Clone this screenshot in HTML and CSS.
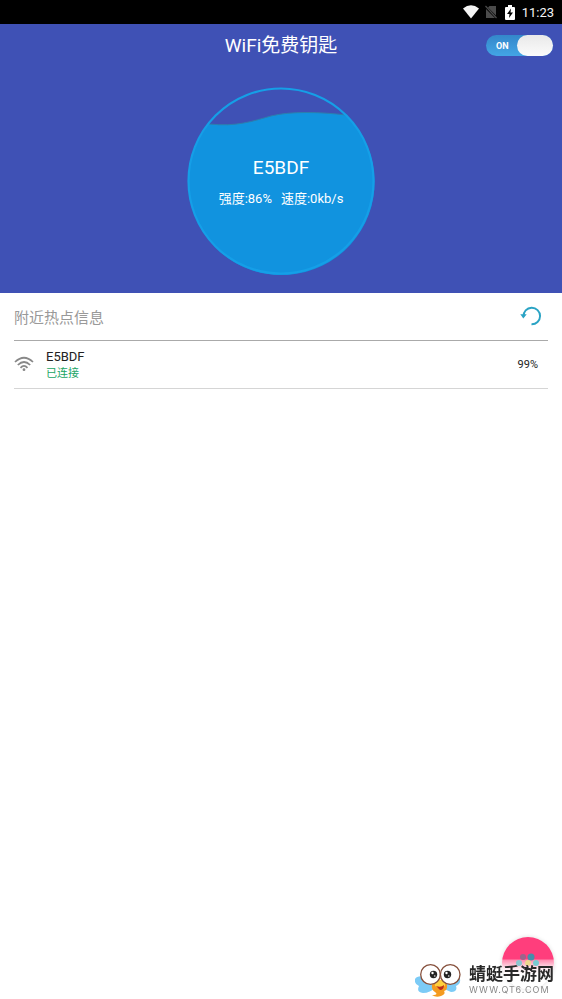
FILE: index.html
```html
<!DOCTYPE html>
<html lang="zh-CN">
<head>
<meta charset="utf-8">
<meta name="viewport" content="width=device-width, initial-scale=1">
<title>WiFi免费钥匙</title>
<link rel="stylesheet" href="styles.css">
</head>
<body>
<div class="status">
  <svg width="16" height="14" viewBox="0 0 16 14" aria-hidden="true"><path fill="#f4f4f4" d="M0 3.500Q8-3 16 3.500L8 13.500Z"/></svg>
  <svg class="sim" width="12" height="14" viewBox="0 0 12 14" aria-hidden="true"><path fill="#4b4b4b" d="M4.500 1H11v9.500L3 2.500ZM1 4l9 9H1Z"/><path stroke="#4b4b4b" stroke-width="1.200" d="M.5 1l11 12"/></svg>
  <svg class="battery" width="10" height="15" viewBox="0 0 10 15" aria-hidden="true"><path fill="#fff" d="M3 0h4v2h2q1 0 1 1v11q0 1-1 1H1q-1 0-1-1V3q0-1 1-1h2Z"/><path d="M6 3.500L2 9h2.500L4 13l4-5.500H5.500Z"/></svg>
  <span>11:23</span>
</div>
<header class="hero">
  <div class="bar">
    <h1>WiFi免费钥匙</h1>
    <button class="switch" type="button" role="switch" aria-checked="true"><span class="on">ON</span><span class="knob"></span></button>
  </div>
  <div class="gauge">
    <svg class="wave" viewBox="0 0 188 188" aria-hidden="true">
      <path fill="#1193df" d="M22 37C50 40 66 34 84 29C104 24 134 25 159 28A93 93 0 1 1 22 37Z"/>
      <path fill="none" stroke="#2c7fad" d="M22 37C50 40 66 34 84 29C104 24 134 25 159 28"/>
      <circle cx="94" cy="94" r="92.500" fill="none" stroke="#159fe7" stroke-width="2.200"/>
    </svg>
    <div class="reading">
      <strong>E5BDF</strong>
      <p><span>强度:86%</span><span>速度:0kb/s</span></p>
    </div>
  </div>
</header>
<main class="list">
  <div class="heading">
    <h2>附近热点信息</h2>
    <button class="refresh" type="button" aria-label="刷新">
      <svg width="22" height="20" viewBox="0 0 22 20" aria-hidden="true"><path fill="none" stroke="#2aa3c4" stroke-width="1.900" d="M3.500 10.500A8.300 8.300 0 1 1 11.500 18.300"/><path fill="#2aa3c4" d="M.3 8.300h6.400L3.300 12.500Z"/></svg>
    </button>
  </div>
  <div class="spot">
    <svg class="signal" width="20" height="16" viewBox="0 0 20 16" aria-hidden="true"><g fill="none" stroke="#888" stroke-width="1.700"><path d="M1 6Q10-2.500 19 6"/><path d="M3.800 9Q10 3 16.200 9"/><path d="M6.500 11.800Q10 8 13.500 11.800"/></g><circle cx="10" cy="13.700" r="1.400" fill="#888"/></svg>
    <div class="name"><span>E5BDF</span><small>已连接</small></div>
    <span class="percent">99%</span>
  </div>
</main>
<button class="fab" type="button" aria-label="更多">
  <svg width="52" height="52" viewBox="0 0 52 52" aria-hidden="true"><circle cx="21" cy="20" r="3" fill="#9b648c"/><circle cx="29" cy="20" r="3.500" fill="#478eaa"/><circle cx="17" cy="26" r="3" fill="#8cc6d0"/><circle cx="26" cy="26" r="3" fill="#eed78f"/><circle cx="34" cy="26" r="3" fill="#79cad1"/></svg>
</button>
<footer class="brand">
  <svg width="46" height="34" viewBox="0 0 46 34" aria-hidden="true">
    <path fill="#7ccbf6" d="M14 15Q3 11 0 16Q-1 21 4 23Q1 29 8 30Q15 30 21 24ZM32 16Q42 11 45 16Q46 21 41 23Q43 29 36 29L27 25Z"/>
    <path fill="#f49b20" d="M18 17H31Q34 27 29 28Q31 31 26 33Q21 35 17 32Q24 32 20 29Q15 26 18 17Z"/>
    <path fill="#ffd13c" d="M20 17h10v6q-6 4-10 0Z"/>
    <path fill="#bd2d19" d="M21 23q5 2 8-1q0 5-4 5Z"/>
    <g fill="#fff" stroke="#86503c" stroke-width="1.300"><circle cx="15.500" cy="11.500" r="9.800"/><circle cx="35.200" cy="11.500" r="9.800"/></g>
    <g fill="#242424"><circle cx="18.500" cy="11.500" r="3.700"/><circle cx="32.500" cy="11.500" r="3.700"/></g>
    <g fill="#fff"><circle cx="17.500" cy="10" r="1.200"/><circle cx="31.500" cy="10" r="1.200"/><circle cx="19.800" cy="13" r=".7"/><circle cx="33.800" cy="13" r=".7"/></g>
  </svg>
  <div class="wordmark"><b>蜻蜓手游网</b><span>WWW.QT6.COM</span></div>
</footer>
</body>
</html>
```
FILE: styles.css
```css
* { box-sizing: border-box; }
body {
  margin: 0;
  min-height: 100vh;
  background: #fff;
  color: #222;
  font-family: Roboto, "Noto Sans CJK SC", sans-serif;
}
button { border: 0; padding: 0; font: inherit; cursor: pointer; }
h1, h2, p { margin: 0; font-weight: 400; }
svg { display: block; flex: none; }

.status {
  display: flex;
  align-items: center;
  justify-content: flex-end;
  height: 24px;
  padding: 0 8px;
  background: #000;
  color: #f4f4f4;
  font-size: 13px;
}
.sim { margin-left: 6px; }
.battery { margin: 0 7px 0 8px; }

.hero { padding-bottom: 18px; background: #3f51b5; color: #fff; }
.bar {
  display: grid;
  grid-template-columns: 1fr auto 1fr;
  align-items: center;
  height: 43px;
  padding: 0 9px;
}
.bar h1 { grid-column: 2; font-size: 19px; line-height: 24px; }
.switch {
  display: flex;
  align-items: center;
  justify-content: space-between;
  justify-self: end;
  width: 67px;
  height: 21px;
  border-radius: 11px;
  background: linear-gradient(#3487ca, #43a5e5);
}
.on { padding-left: 10px; color: #fff; font-size: 9px; font-weight: 700; }
.knob {
  width: 36px;
  height: 21px;
  border-radius: 11px;
  background: linear-gradient(#e9e9e9, #fbfbfb);
}

.gauge { display: grid; width: 188px; margin: 20px auto 0; }
.wave, .reading { grid-area: 1 / 1; }
.reading { z-index: 1; padding-top: 69px; text-align: center; }
.reading strong { display: block; font-size: 19px; line-height: 24px; font-weight: 400; }
.reading p {
  display: flex;
  justify-content: center;
  gap: 9px;
  margin-top: 9px;
  font-size: 13px;
  line-height: 20px;
}

.list { padding: 0 14px; }
.heading {
  display: flex;
  align-items: center;
  justify-content: space-between;
  height: 48px;
  padding-right: 6px;
  border-bottom: 1px solid #aaa;
}
.heading h2 { color: #999; font-size: 15px; }
.refresh { padding-bottom: 2px; background: none; }
.spot {
  display: flex;
  align-items: center;
  height: 48px;
  padding-right: 10px;
  border-bottom: 1px solid #d5d5d5;
}
.signal { margin-bottom: 2px; }
.name { flex: 1; margin-left: 12px; font-size: 13px; line-height: 17px; }
.name span, .name small { display: block; }
.name small { color: #20a464; font-size: 11px; }
.percent { font-size: 11px; }

.fab {
  position: fixed;
  right: 8px;
  bottom: 10px;
  width: 52px;
  height: 52px;
  border-radius: 50%;
  background: linear-gradient(#ff3e7c 0 22px, #ff8baf 23px, #fff0f5 32px, #fff 38px);
  box-shadow: 0 0 4px #ddd;
}
.brand {
  position: fixed;
  right: 8px;
  bottom: 2px;
  display: flex;
  align-items: center;
  gap: 8px;
}
.wordmark { color: #292929; white-space: nowrap; }
.wordmark b, .wordmark span { display: block; }
.wordmark b { font-size: 17px; line-height: 20px; }
.wordmark span {
  color: #888;
  font-family: Inter, "Liberation Sans", sans-serif;
  font-size: 9px;
  line-height: 12px;
  letter-spacing: 1px;
}
```
